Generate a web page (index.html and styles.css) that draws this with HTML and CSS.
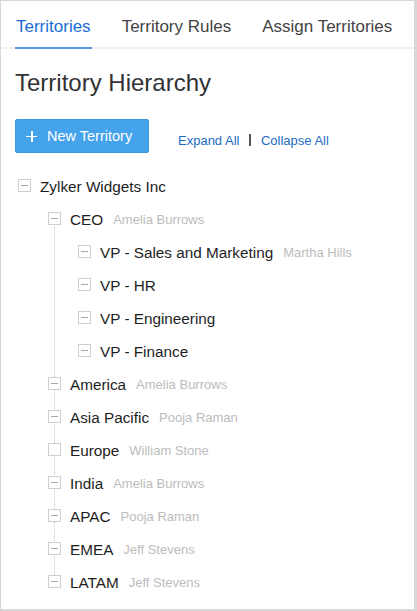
FILE: index.html
```html
<!DOCTYPE html>
<html>
<head>
<meta charset="utf-8">
<link rel="stylesheet" href="styles.css">
</head>
<body>
<div class="panel">
  <nav class="tabs">
    <a class="tab active">Territories</a>
    <a class="tab">Territory Rules</a>
    <a class="tab">Assign Territories</a>
  </nav>
  <main class="content">
    <h1 class="title">Territory Hierarchy</h1>
    <div class="actions">
      <button class="btn-new"><span class="plus"></span>New Territory</button>
      <div class="links">
        <a class="link">Expand All</a>
        <span class="sep"></span>
        <a class="link">Collapse All</a>
      </div>
    </div>
    <div class="tree">
      <div class="row root"><span class="box minus"></span><span class="name">Zylker Widgets Inc</span></div>
      <div class="branch">
        <div class="row"><span class="box minus"></span><span class="name">CEO</span><span class="owner">Amelia Burrows</span></div>
        <div class="sub">
          <div class="row"><span class="box minus"></span><span class="name">VP - Sales and Marketing</span><span class="owner">Martha Hills</span></div>
          <div class="row"><span class="box minus"></span><span class="name">VP - HR</span></div>
          <div class="row"><span class="box minus"></span><span class="name">VP - Engineering</span></div>
          <div class="row"><span class="box minus"></span><span class="name">VP - Finance</span></div>
        </div>
        <div class="row"><span class="box minus"></span><span class="name">America</span><span class="owner">Amelia Burrows</span></div>
        <div class="row"><span class="box minus"></span><span class="name">Asia Pacific</span><span class="owner">Pooja Raman</span></div>
        <div class="row"><span class="box"></span><span class="name">Europe</span><span class="owner">William Stone</span></div>
        <div class="row"><span class="box minus"></span><span class="name">India</span><span class="owner">Amelia Burrows</span></div>
        <div class="row"><span class="box minus"></span><span class="name">APAC</span><span class="owner">Pooja Raman</span></div>
        <div class="row"><span class="box minus"></span><span class="name">EMEA</span><span class="owner">Jeff Stevens</span></div>
        <div class="row"><span class="box minus"></span><span class="name">LATAM</span><span class="owner">Jeff Stevens</span></div>
      </div>
    </div>
  </main>
</div>
</body>
</html>
```
FILE: styles.css
```css
* { box-sizing: border-box; }
html, body { margin: 0; padding: 0; background: #fff; }
body { font-family: "Liberation Sans", Arial, sans-serif; color: #222; }

.panel {
  width: 417px;
  height: 611px;
  border: 1px solid #d8d8d8;
  border-right-width: 3px;
  border-bottom-width: 2px;
  overflow: hidden;
}

.tabs {
  display: flex;
  gap: 29px;
  padding-left: 14px;
  border-bottom: 2px solid #efefef;
}
.tab {
  font-size: 17px;
  line-height: 20px;
  padding: 16px 1px 10px;
  color: #444;
  border-bottom: 2px solid transparent;
  margin-bottom: -2px;
}
.tab.active { color: #1a6ed6; border-bottom-color: #5a9be6; }

.content { padding: 0 14px; }

.title {
  margin: 19px 0 0;
  font-size: 24px;
  line-height: 30px;
  font-weight: normal;
  color: #333;
}

.actions {
  display: flex;
  align-items: center;
  margin-top: 21px;
}
.btn-new {
  display: flex;
  align-items: center;
  width: 134px;
  height: 34px;
  padding: 0 0 0 10px;
  border: 1px solid #3d98e0;
  border-radius: 2px;
  background: #45a3ec;
  color: #fff;
  font-family: inherit;
  font-size: 14.5px;
}
.plus {
  position: relative;
  width: 11px;
  height: 11px;
  margin-right: 10px;
}
.plus::before, .plus::after {
  content: "";
  position: absolute;
  background: #fff;
}
.plus::before { left: 0; right: 0; top: 5px; height: 1.5px; }
.plus::after { top: 0; bottom: 0; left: 5px; width: 1.5px; }

.links {
  display: flex;
  align-items: center;
  margin-left: 29px;
  margin-top: 8px;
}
.link { font-size: 13px; color: #1c6cc4; }
.sep {
  width: 1.5px;
  height: 12px;
  background: #555;
  margin: 0 10px;
}

.tree { margin-top: 17px; padding-left: 3px; }

.row {
  display: flex;
  align-items: center;
  height: 33px;
}
.box {
  position: relative;
  flex: none;
  width: 13px;
  height: 13px;
  border: 1px solid #cfcfcf;
  background: #fff;
  margin-right: 9px;
  margin-top: -2px;
}
.box.minus::after {
  content: "";
  position: absolute;
  left: 2px;
  right: 2px;
  top: 5px;
  height: 1px;
  background: #a8a8a8;
}
.name { font-size: 15.3px; color: #1e1e1e; white-space: nowrap; }
.owner { font-size: 13px; color: #bcbcbc; margin-left: 10px; white-space: nowrap; }

.branch {
  position: relative;
  margin-left: 30px;
}
.branch::before {
  content: "";
  position: absolute;
  left: 6px;
  top: 24px;
  bottom: 20px;
  border-left: 1px dotted #c4c4c4;
}
.sub { margin-left: 30px; }
```
